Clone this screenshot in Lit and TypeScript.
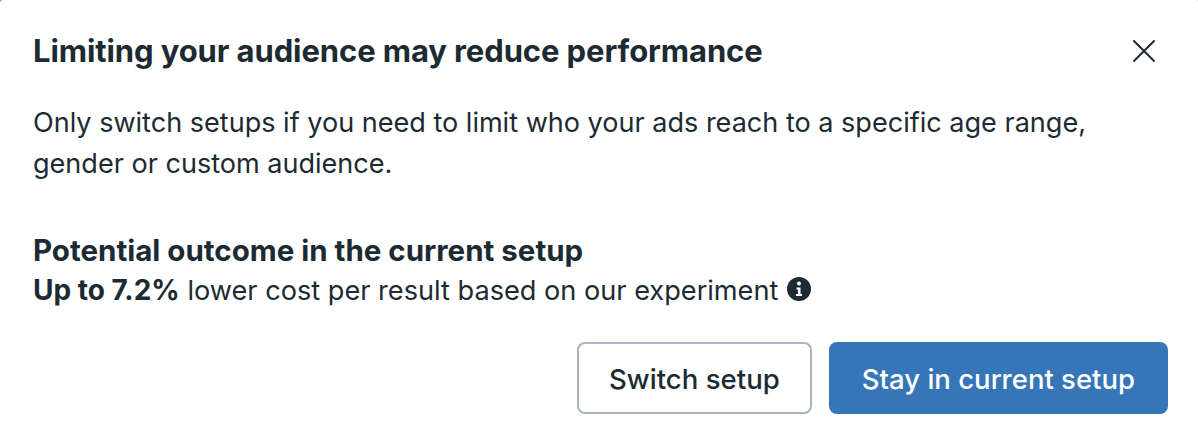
import { LitElement, html, css } from "lit";
import { customElement } from "lit/decorators.js";

@customElement("app-root")
export class AppRoot extends LitElement {
  static styles = css`
    :host { display: block; width: 1198px; height: 440px; overflow: hidden; background: #8a8a8a; }
    .dialog {
      box-sizing: border-box; width: 1198px; height: 440px; background: #fff; border-radius: 3px 1px 0 0;
      padding: 29px 30px 26px 33px; display: flex; flex-direction: column;
      font-family: Inter, "Noto Sans", sans-serif; color: #1c2b33;
    }
    .head { display: flex; justify-content: space-between; align-items: center; height: 44px; }
    h1 { margin: 0; font-size: 31px; font-weight: 700; line-height: 44px; letter-spacing: -0.1px; }
    .close { display: block; width: 24px; height: 24px; margin-right: 12px; }
    .desc { margin: 28.5px 0 0; font-size: 27.05px; line-height: 41px; }
    .outcome { margin-top: 47.5px; }
    h2 { margin: 0; font-size: 29.5px; font-weight: 700; line-height: 38px; }
    .line { display: flex; align-items: center; gap: 9px; font-size: 27.15px; line-height: 38px; margin-top: 2px; }
    .line b { font-weight: 700; font-size: 28px; }
    .info { display: block; width: 24px; height: 24px; margin-top: -4px; }
    .actions { margin-top: auto; display: flex; justify-content: flex-end; gap: 17px; }
    button {
      box-sizing: border-box; height: 72px; border-radius: 8px; padding-top: 2px;
      font-family: Inter, "Noto Sans", sans-serif; font-weight: 500;
    }
    .secondary { background: #fff; color: #1c2b33; border: 2px solid #a9b5c2; padding-left: 30px; padding-right: 30px; font-size: 27.6px; }
    .primary { background: #3775b9; color: #fff; border: 0; padding-left: 33px; padding-right: 33px; font-size: 27.5px; }
  `;
  render() {
    return html`<div class="dialog">
      <div class="head">
        <h1>Limiting your audience may reduce performance</h1>
        <svg class="close" viewBox="0 0 24 24" fill="none" stroke="#1c2b33" stroke-width="2" stroke-linecap="round"><path d="M2 2 22 22M22 2 2 22"/></svg>
      </div>
      <p class="desc">Only switch setups if you need to limit who your ads reach to a specific age range,<br>gender or custom audience.</p>
      <div class="outcome">
        <h2>Potential outcome in the current setup</h2>
        <div class="line"><span><b>Up to 7.2%</b> lower cost per result based on our experiment</span>
          <svg class="info" viewBox="0 0 24 24"><circle cx="12" cy="12" r="12" fill="#1c2b33"/><circle cx="12" cy="6.6" r="2" fill="#fff"/><path d="M9.5 10.5H13.5V17H15V19H9V17H11V12.5H9.5Z" fill="#fff"/></svg>
        </div>
      </div>
      <div class="actions">
        <button class="secondary">Switch setup</button>
        <button class="primary">Stay in current setup</button>
      </div>
    </div>`;
  }
}
